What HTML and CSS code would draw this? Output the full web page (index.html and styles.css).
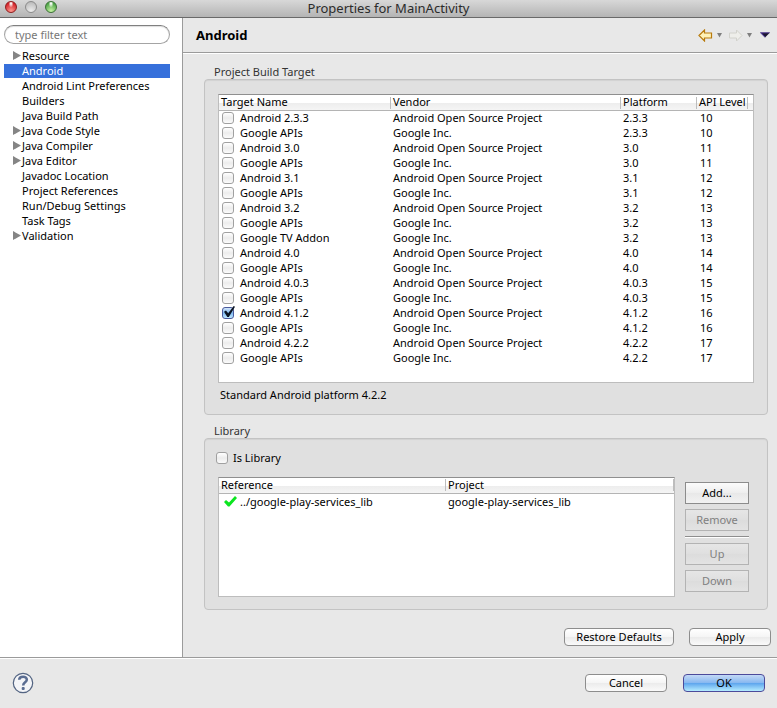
FILE: index.html
```html
<!DOCTYPE html>
<html lang="en">
  <head>
    <meta charset="UTF-8" />
    <meta name="viewport" content="width=device-width, initial-scale=1.0" />
    <title>Properties for MainActivity</title>
    <link rel="stylesheet" href="styles.css">
  </head>

  <body>
    <header class="titlebar">
      <div class="window-controls">
        <button class="light light-close" aria-label="Close"></button>
        <button class="light light-minimize" aria-label="Minimize" disabled></button>
        <button class="light light-zoom" aria-label="Zoom"></button>
      </div>
      <h1>Properties for MainActivity</h1>
    </header>

    <div class="main">
      <nav class="sidebar">
        <input type="text" class="filter" placeholder="type filter text" aria-label="type filter text" />
        <ul class="tree">
          <li class="parent"><a href="#">Resource</a></li>
          <li class="selected"><a href="#">Android</a></li>
          <li><a href="#">Android Lint Preferences</a></li>
          <li><a href="#">Builders</a></li>
          <li><a href="#">Java Build Path</a></li>
          <li class="parent"><a href="#">Java Code Style</a></li>
          <li class="parent"><a href="#">Java Compiler</a></li>
          <li class="parent"><a href="#">Java Editor</a></li>
          <li><a href="#">Javadoc Location</a></li>
          <li><a href="#">Project References</a></li>
          <li><a href="#">Run/Debug Settings</a></li>
          <li><a href="#">Task Tags</a></li>
          <li class="parent"><a href="#">Validation</a></li>
        </ul>
      </nav>

      <main class="page">
        <div class="page-header">
          <h2>Android</h2>
          <div class="toolbar">
            <button class="tool" aria-label="Back">
              <svg width="15" height="13" viewBox="0 0 15 13">
                <path d="M1 6.5 L6.5 1 V4 H13.5 V9 H6.5 V12 Z" fill="#fff2b8" stroke="#b87a0c" stroke-width="1.2" />
              </svg>
            </button>
            <button class="tool" aria-label="Back history">
              <svg width="5" height="5" viewBox="0 0 5 5"><path d="M0 0 H5 L2.5 4.5 Z" fill="#7f7f7f" /></svg>
            </button>
            <button class="tool tool-forward" aria-label="Forward" disabled>
              <svg width="15" height="13" viewBox="0 0 15 13">
                <path d="M14 6.5 L8.5 1 V4 H1.5 V9 H8.5 V12 Z" fill="#eeeeea" stroke="#d2d2cc" />
              </svg>
            </button>
            <button class="tool" aria-label="Forward history">
              <svg width="5" height="5" viewBox="0 0 5 5"><path d="M0 0 H5 L2.5 4.5 Z" fill="#7f7f7f" /></svg>
            </button>
            <button class="tool tool-menu" aria-label="Menu">
              <svg width="10" height="6" viewBox="0 0 10 6">
                <path d="M0 0.5 H10 L5 5.5 Z" fill="#1c1730" />
                <path d="M0 0.5 H10 L9.2 1.3 H1.8 L5.5 5 L5 5.5 Z" fill="#5a3fae" />
              </svg>
            </button>
          </div>
        </div>

        <div class="page-body">
          <section class="group">
            <h3>Project Build Target</h3>
            <div class="group-box">
              <div class="viewer viewer-targets">
                <table class="grid targets">
                  <colgroup>
                    <col class="col-name" />
                    <col />
                    <col class="col-platform" />
                    <col class="col-api" />
                  </colgroup>
                  <thead>
                    <tr><th>Target Name</th><th>Vendor</th><th>Platform</th><th>API Level</th></tr>
                  </thead>
                  <tbody>
                    <tr><td><label><input type="checkbox" />Android 2.3.3</label></td><td>Android Open Source Project</td><td>2.3.3</td><td>10</td></tr>
                    <tr><td><label><input type="checkbox" />Google APIs</label></td><td>Google Inc.</td><td>2.3.3</td><td>10</td></tr>
                    <tr><td><label><input type="checkbox" />Android 3.0</label></td><td>Android Open Source Project</td><td>3.0</td><td>11</td></tr>
                    <tr><td><label><input type="checkbox" />Google APIs</label></td><td>Google Inc.</td><td>3.0</td><td>11</td></tr>
                    <tr><td><label><input type="checkbox" />Android 3.1</label></td><td>Android Open Source Project</td><td>3.1</td><td>12</td></tr>
                    <tr><td><label><input type="checkbox" />Google APIs</label></td><td>Google Inc.</td><td>3.1</td><td>12</td></tr>
                    <tr><td><label><input type="checkbox" />Android 3.2</label></td><td>Android Open Source Project</td><td>3.2</td><td>13</td></tr>
                    <tr><td><label><input type="checkbox" />Google APIs</label></td><td>Google Inc.</td><td>3.2</td><td>13</td></tr>
                    <tr><td><label><input type="checkbox" />Google TV Addon</label></td><td>Google Inc.</td><td>3.2</td><td>13</td></tr>
                    <tr><td><label><input type="checkbox" />Android 4.0</label></td><td>Android Open Source Project</td><td>4.0</td><td>14</td></tr>
                    <tr><td><label><input type="checkbox" />Google APIs</label></td><td>Google Inc.</td><td>4.0</td><td>14</td></tr>
                    <tr><td><label><input type="checkbox" />Android 4.0.3</label></td><td>Android Open Source Project</td><td>4.0.3</td><td>15</td></tr>
                    <tr><td><label><input type="checkbox" />Google APIs</label></td><td>Google Inc.</td><td>4.0.3</td><td>15</td></tr>
                    <tr><td><label><input type="checkbox" checked />Android 4.1.2</label></td><td>Android Open Source Project</td><td>4.1.2</td><td>16</td></tr>
                    <tr><td><label><input type="checkbox" />Google APIs</label></td><td>Google Inc.</td><td>4.1.2</td><td>16</td></tr>
                    <tr><td><label><input type="checkbox" />Android 4.2.2</label></td><td>Android Open Source Project</td><td>4.2.2</td><td>17</td></tr>
                    <tr><td><label><input type="checkbox" />Google APIs</label></td><td>Google Inc.</td><td>4.2.2</td><td>17</td></tr>
                  </tbody>
                </table>
              </div>
              <p class="description">Standard Android platform 4.2.2</p>
            </div>
          </section>

          <section class="group">
            <h3>Library</h3>
            <div class="group-box library-box">
              <label class="is-library"><input type="checkbox" />Is Library</label>
              <div class="library">
                <div class="viewer viewer-library">
                  <table class="grid references">
                    <thead>
                      <tr><th>Reference</th><th>Project</th></tr>
                    </thead>
                    <tbody>
                      <tr>
                        <td>
                          <span class="reference">
                            <svg width="13" height="11" viewBox="0 0 13 11">
                              <path d="M0 6 L2 4 L5 6.5 L11 0 L13 2 L5.5 10.5 H4 Z" fill="#0be51f" />
                            </svg>
                            ../google-play-services_lib
                          </span>
                        </td>
                        <td>google-play-services_lib</td>
                      </tr>
                    </tbody>
                  </table>
                </div>
                <div class="library-buttons">
                  <button class="square">Add...</button>
                  <button class="square" disabled>Remove</button>
                  <hr />
                  <button class="square" disabled>Up</button>
                  <button class="square" disabled>Down</button>
                </div>
              </div>
            </div>
          </section>

          <div class="page-actions">
            <button class="push push-wide">Restore Defaults</button>
            <button class="push">Apply</button>
          </div>
        </div>
      </main>
    </div>

    <footer class="footer">
      <button class="tool" aria-label="Help">
        <svg width="22" height="22" viewBox="0 0 22 22">
          <circle cx="11" cy="11" r="9.7" fill="#f4f5f8" stroke="#536482" stroke-width="1.2" />
          <path d="M7.2 7.8 C7.4 3.6 15 3.7 14.8 7.8 C14.7 10.4 11.2 10.2 11.2 13.4" fill="none" stroke="#5a6d92" stroke-width="2.6" />
          <rect x="9.7" y="15" width="3" height="3" rx="1" fill="#5a6d92" />
        </svg>
      </button>
      <div class="dialog-buttons">
        <button class="push">Cancel</button>
        <button class="push push-default">OK</button>
      </div>
    </footer>
  </body>
</html>
```

FILE: styles.css
```css
* {
  box-sizing: border-box;
}

body {
  margin: 0;
  min-height: 100vh;
  display: flex;
  flex-direction: column;
  font-family: "Lucida Grande", "Noto Sans", sans-serif;
  font-size: 11px;
  line-height: 15px;
  color: #000;
  background: #e8e8e8;
}

h1,
h2,
h3,
p,
ul {
  margin: 0;
  padding: 0;
}

button,
input {
  font: inherit;
  margin: 0;
  padding: 0;
}

/* Title bar */
.titlebar {
  display: grid;
  grid-template-columns: 1fr auto 1fr;
  align-items: center;
  height: 18px;
  background: linear-gradient(#d8d8d8, #b4b4b4);
  border-bottom: 1px solid #696969;
}

.titlebar h1 {
  font-size: 13px;
  font-weight: normal;
  line-height: 14px;
  padding-bottom: 2px;
  color: #2b2b2b;
}

.window-controls {
  display: flex;
  gap: 8px;
  padding: 0 0 3px 5px;
}

.light {
  width: 12px;
  height: 12px;
  border: 1px solid #8b8b8b;
  border-radius: 50%;
  background: radial-gradient(circle at 50% 90%, #ededed, #b9b9b9 90%);
}

.light-close {
  border-color: #8e1d1d;
  background: radial-gradient(ellipse at 50% 15%, #fff 5%, transparent 35%),
    radial-gradient(circle at 50% 90%, #ff9a90, #d3242b 75%);
}

.light-zoom {
  border-color: #3c7036;
  background: radial-gradient(ellipse at 50% 15%, #fff 5%, transparent 35%),
    radial-gradient(circle at 50% 90%, #c9f5a5, #4fa548 75%);
}

.main {
  flex: 1;
  display: flex;
}

/* Sidebar */
.sidebar {
  width: 183px;
  padding: 7px 12px 0 4px;
  background: #fff;
  border-right: 1px solid #9b9b9b;
}

.filter {
  display: block;
  width: 100%;
  height: 19px;
  padding: 0 10px;
  border: 1px solid #a4a4a4;
  border-top-color: #808080;
  border-radius: 10px;
  background: #fff;
  box-shadow: inset 0 1px 1px #ddd;
}

.filter::placeholder {
  color: #777;
}

.tree {
  margin-top: 4px;
  list-style: none;
}

.tree li {
  display: flex;
  align-items: center;
  height: 15px;
  padding-left: 18px;
}

.tree a {
  color: #000;
  text-decoration: none;
}

.tree .parent {
  padding-left: 9px;
}

.tree .parent::before {
  content: "";
  width: 8px;
  height: 9px;
  margin-right: 1px;
  background: #858585;
  clip-path: polygon(0 0, 100% 50%, 0 100%);
}

.tree .selected {
  background: linear-gradient(#3670db, #3670db) no-repeat 0 1px;
}

.tree .selected a {
  color: #fff;
}

/* Page */
.page {
  flex: 1;
  min-width: 0;
}

.page-header {
  display: flex;
  justify-content: space-between;
  align-items: center;
  height: 35px;
  padding: 0 7px 0 13px;
  border-bottom: 1px solid #9b9b9b;
  box-shadow: 0 1px #fff;
}

.page-header h2 {
  font-size: 13px;
  font-weight: bold;
}

.toolbar {
  display: flex;
  align-items: center;
  gap: 4px;
}

.tool {
  display: flex;
  border: 0;
  background: none;
}

.tool-forward {
  margin-left: 2px;
}

.tool-menu {
  margin-left: 4px;
}

.page-body {
  padding: 11px 6px 0 21px;
}

.group {
  margin-right: 3px;
  margin-bottom: 8px;
}

.group h3 {
  padding-left: 10px;
  font-size: 11px;
  font-weight: normal;
  color: #333;
}

.group-box {
  padding: 14px 13px 12px;
  border: 1px solid #c3c3c3;
  border-radius: 4px;
  background: #e0e0e0;
  box-shadow: inset 0 1px 1px #d2d2d2;
}

.library-box {
  padding-top: 11px;
}

.description {
  padding: 4px 2px 0;
}

/* Tables */
.viewer {
  border: 1px solid #bdbdbd;
  border-top-color: #8f8f8f;
  background: #fff;
}

.viewer-targets {
  min-height: 289px;
}

.viewer-library {
  flex: 1;
  min-height: 120px;
}

.grid {
  width: 100%;
  table-layout: fixed;
  border-spacing: 0;
}

.col-name {
  width: 172px;
}

.col-platform {
  width: 76px;
}

.col-api {
  width: 56px;
}

.grid thead {
  background: linear-gradient(#fff 50%, #ededed 50%, #f6f6f6);
}

.grid th {
  height: 16px;
  padding: 0 2px;
  border-bottom: 1px solid #b4b4b4;
  font-weight: normal;
  line-height: 14px;
  text-align: left;
  vertical-align: top;
  white-space: nowrap;
  background: linear-gradient(#bdbdbd, #bdbdbd) no-repeat right center / 1px 12px;
}

.targets th:last-child {
  background-position: right 5px center;
}

.references th:first-child {
  width: 227px;
}

.grid td {
  height: 15px;
  padding: 0 2px;
  line-height: 13px;
  vertical-align: top;
  white-space: nowrap;
}

.targets td:last-child {
  padding-left: 3px;
}

.references td {
  height: 18px;
  line-height: 16px;
}

.grid label,
.reference {
  display: flex;
  gap: 6px;
  padding-left: 1px;
}

.grid label input {
  margin-top: 1px;
}

.reference {
  align-items: center;
  gap: 3px;
  padding-left: 3px;
}

input[type="checkbox"] {
  appearance: none;
  position: relative;
  width: 12px;
  height: 12px;
  border: 1px solid #a0a0a0;
  border-radius: 3px;
  background: linear-gradient(#fff, #ececec 50%, #fbfbfb);
}

input[type="checkbox"]:checked {
  border-color: #4a5a9c;
  background: linear-gradient(#d3e5fa, #7db8f2 50%, #bfe8ff);
}

input[type="checkbox"]:checked::after {
  content: "";
  position: absolute;
  top: -2px;
  left: 1px;
  width: 11px;
  height: 11px;
  background: #0b1524;
  clip-path: polygon(0 52%, 18% 42%, 38% 66%, 88% 0, 100% 6%, 44% 100%, 30% 100%);
}

/* Library */
.is-library {
  display: inline-flex;
  align-items: center;
  gap: 5px;
  margin-left: -2px;
}

.library {
  display: flex;
  gap: 10px;
  margin: 10px 5px 0 0;
}

.library-buttons {
  display: flex;
  flex-direction: column;
  gap: 5px;
  width: 64px;
  padding-top: 5px;
}

.library-buttons hr {
  width: 100%;
  height: 2px;
  margin: 0;
  border: 0;
  border-top: 1px solid #8e8e8e;
  background: #fff;
}

.square {
  height: 22px;
  border: 1px solid #8c8c8c;
  background: linear-gradient(#fbfbfb, #eee 50%, #e8e8e8 50%, #f2f2f2);
  color: #000;
}

.square:disabled {
  border-color: #b3b3b3;
  background: linear-gradient(#e6e6e6, #dfdfdf 50%, #dcdcdc 50%, #e3e3e3);
  color: #808080;
}

/* Push buttons */
.push {
  min-width: 82px;
  height: 18px;
  padding: 0 10px;
  border: 1px solid #8d8d8d;
  border-radius: 4px;
  background: linear-gradient(#fff, #f5f5f5 50%, #ebebeb 50%, #fafafa);
  color: #000;
  line-height: 16px;
}

.push-wide {
  min-width: 110px;
}

.push-default {
  border-color: #4c4a9a;
  background: linear-gradient(#c3d9f6, #86b7f0 50%, #5ba3ed 50%, #b4ecff);
}

.page-actions {
  display: flex;
  justify-content: flex-end;
  gap: 15px;
  padding-top: 10px;
}

/* Footer */
.footer {
  display: flex;
  justify-content: space-between;
  align-items: center;
  height: 51px;
  padding: 0 12px;
  border-top: 1px solid #9b9b9b;
  box-shadow: inset 0 1px #fff;
}

.dialog-buttons {
  display: flex;
  gap: 16px;
}
```
